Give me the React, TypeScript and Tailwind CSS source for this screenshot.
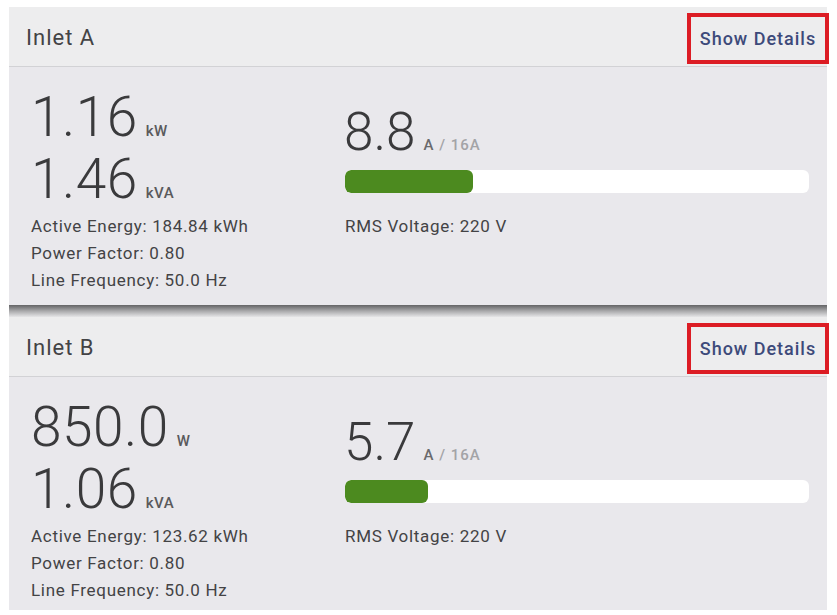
const inlets = [
  { name: "Inlet A", power: "1.16", powerUnit: "kW", apparent: "1.46", current: 8.8, energy: "184.84", bodyH: "h-[238px]" },
  { name: "Inlet B", power: "850.0", powerUnit: "W", apparent: "1.06", current: 5.7, energy: "123.62", bodyH: "h-[233px]" },
];

function BigValue({ value, unit }: { value: string; unit: string }) {
  return (
    <div className="flex items-baseline h-[62px] leading-[62px]">
      <span className="text-[55px] font-light tracking-[0.5px] text-[#3a3a3c]">{value}</span>
      <span className="ml-[8px] text-[15px] font-medium tracking-[0.5px] text-[#5a5a5c]">{unit}</span>
    </div>
  );
}

function InletCard({ inlet }: { inlet: (typeof inlets)[number] }) {
  return (
    <section className="bg-[#e9e8ec]">
      {/* Header */}
      <div className="h-[59px] flex justify-between bg-[#ededee] pl-[17px]">
        <h2 className="self-center mt-[2px] text-[22px] tracking-[1px] text-[#434345]">{inlet.name}</h2>
        <button
          type="button"
          className="mt-[6px] -mr-[2px] w-[142px] h-[51px] border-[4px] border-[#dc1c24] flex items-center justify-center text-[18px] font-medium tracking-[1px] text-[#3d4a7a]"
        >
          Show Details
        </button>
      </div>
      <div className="h-px bg-[#d2d2d5]" />

      {/* Body */}
      <div className={`grid grid-cols-[314px_1fr] pl-[22px] pr-[18px] ${inlet.bodyH}`}>
        <div className="pt-[19px]">
          <BigValue value={inlet.power} unit={inlet.powerUnit} />
          <BigValue value={inlet.apparent} unit="kVA" />
          <div className="mt-[3px] text-[17px] leading-[27px] tracking-[0.7px] text-[#434345]">
            <p>Active Energy: {inlet.energy} kWh</p>
            <p>Power Factor: 0.80</p>
            <p>Line Frequency: 50.0 Hz</p>
          </div>
        </div>

        <div className="pt-[34px]">
          <div className="flex items-baseline h-[62px] leading-[62px] -ml-[1px]">
            <span className="text-[53px] font-light text-[#3a3a3c]">{inlet.current}</span>
            <span className="ml-[8px] text-[15px] font-medium tracking-[1px] text-[#6a6a6c]">
              A <span className="text-[#a3a3a6]">/ 16A</span>
            </span>
          </div>
          <div className="mt-[7px] h-[23px] rounded-[6px] bg-white overflow-hidden">
            <div
              className="h-full rounded-[6px] bg-[#4c8a1f]"
              style={{ width: `${(inlet.current / 32) * 100}%` }}
            />
          </div>
          <p className="mt-[20px] text-[17px] leading-[27px] tracking-[0.7px] text-[#434345]">RMS Voltage: 220 V</p>
        </div>
      </div>
    </section>
  );
}

export default function App() {
  return (
    <div className="w-[837px] h-[615px] bg-white pt-[7px] pl-[9px] font-[Roboto,sans-serif] overflow-hidden">
      <div className="w-[818px]">
        <InletCard inlet={inlets[0]} />
        <div className="h-[12px] bg-linear-to-b from-[#646466] via-[#a9a9ab] to-[#e6e6e8]" />
        <InletCard inlet={inlets[1]} />
      </div>
    </div>
  );
}
